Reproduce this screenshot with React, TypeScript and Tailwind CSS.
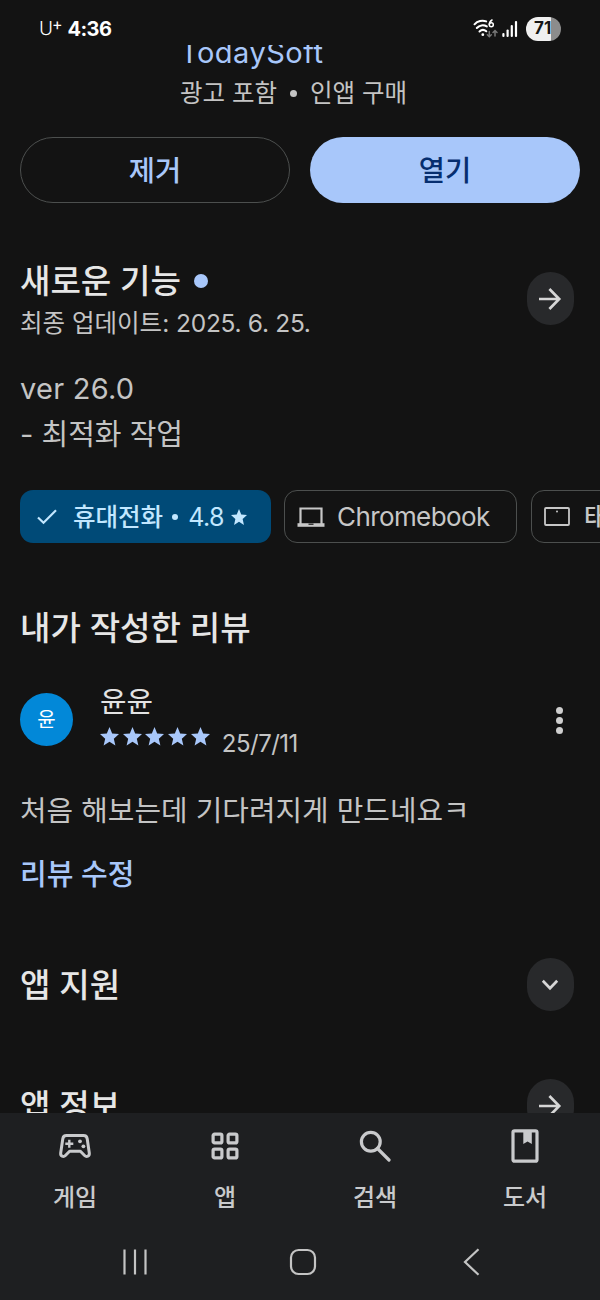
import type { ReactNode } from "react";

const NAV_TABS = [
  { label: "게임", icon: <GameIcon /> },
  { label: "앱", icon: <AppsIcon /> },
  { label: "검색", icon: <SearchIcon /> },
  { label: "도서", icon: <BookIcon /> },
];

function Star({ className }: { className: string }) {
  return (
    <svg viewBox="2 2 20 19" preserveAspectRatio="none" className={className} fill="currentColor">
      <path d="M12 17.270L18.180 21l-1.640-7.030L22 9.240l-7.190-.610L12 2 9.190 8.630 2 9.240l5.460 4.730L5.820 21z" />
    </svg>
  );
}

function GameIcon() {
  return (
    <svg width="34" height="26" viewBox="0 0 34 26" fill="none" stroke="currentColor">
      <path
        d="M8.500 2.500h17c2 0 3.400 1.300 3.700 3.200l2.100 14.300c.5 3.300-2.800 4.400-4.700 2.500L22.400 18.200H11.600L7.400 22.500c-1.900 1.900-5.200.8-4.700-2.500L4.800 5.700C5.100 3.800 6.500 2.500 8.500 2.500z"
        strokeWidth="3"
        strokeLinejoin="round"
      />
      <path d="M11.300 6.800v8M7.300 10.800h8" strokeWidth="2.400" />
      <circle cx="22" cy="8.300" r="1.900" fill="currentColor" stroke="none" />
      <circle cx="25.400" cy="13.300" r="1.900" fill="currentColor" stroke="none" />
    </svg>
  );
}

function AppsIcon() {
  return (
    <svg width="28" height="28" viewBox="0 0 28 28" fill="none" stroke="currentColor" strokeWidth="3.200">
      <rect x="2.100" y="2.100" width="8.800" height="8.800" rx="1.500" />
      <rect x="17.100" y="2.100" width="8.800" height="8.800" rx="1.500" />
      <rect x="2.100" y="17.100" width="8.800" height="8.800" rx="1.500" />
      <rect x="17.100" y="17.100" width="8.800" height="8.800" rx="1.500" />
    </svg>
  );
}

function SearchIcon() {
  return (
    <svg width="32" height="32" viewBox="0 0 32 32" fill="none" stroke="currentColor" strokeWidth="3.200">
      <circle cx="11.800" cy="11.800" r="9.400" />
      <path d="M18.500 18.500L30 30" strokeLinecap="round" />
    </svg>
  );
}

function BookIcon() {
  return (
    <svg width="28" height="34" viewBox="0 0 28 34" fill="none" stroke="currentColor" strokeWidth="3.200">
      <rect x="2" y="1.800" width="24" height="30.400" rx="1.500" />
      <path d="M12.300 2h8.500v13l-4.250-2.400-4.250 2.400z" fill="currentColor" stroke="none" />
    </svg>
  );
}

function ArrowIcon() {
  return (
    <svg width="24" height="24" viewBox="0 0 24 24" fill="none" stroke="currentColor" strokeWidth="2.700">
      <path d="M1 12h20.500M11.400 2l9.800 10-9.800 10" />
    </svg>
  );
}

function ChevronIcon() {
  return (
    <svg width="18" height="12" viewBox="0 0 18 12" fill="none" stroke="currentColor" strokeWidth="2.700">
      <path d="M1.800 1.800L9 9.300l7.200-7.500" />
    </svg>
  );
}

function RoundButton({ children }: { children: ReactNode }) {
  return (
    <button
      type="button"
      className="flex h-[53px] w-[47px] shrink-0 items-center justify-center rounded-full bg-[#28292b] pr-[1px] text-[#d6d6d6]"
    >
      {children}
    </button>
  );
}

function StatusBar() {
  return (
    <header className="flex h-[45px] shrink-0 items-center justify-between px-[39px] pt-[12px] text-white">
      <div className="flex h-[33px] items-center">
        <span className="text-[19px] leading-none font-light">U</span>
        <span className="mb-[10px] -ml-px text-[16px] leading-none">+</span>
        <span className="ml-[5px] text-[20px] leading-none font-bold tracking-[-0.600px]">4:36</span>
      </div>
      <div className="flex h-[33px] items-center">
        <svg width="26" height="20" viewBox="0 0 26 20" fill="none" stroke="currentColor" strokeWidth="2" strokeLinecap="round">
          <path d="M1.500 5.300C4.500 1.800 9.500 .8 13.200 2.400M3.800 9c2.600-2.900 6.800-3.400 10-1.600M6.500 12.500c2-1.900 4.800-1.900 6.800-.2" />
          <circle cx="9.800" cy="15.700" r="1.400" fill="currentColor" stroke="none" />
          <path d="M19 1c-2 1.200-2.700 2.800-2.700 4.600" strokeWidth="1.500" />
          <circle cx="18.300" cy="5.800" r="2" strokeWidth="1.500" />
          <path d="M16.300 12.500v5M14.300 15.800l2 2 2-2M22 17v-5M20 13.500l2-2 2 2" stroke="#777" strokeWidth="1.500" />
        </svg>
        <svg width="16" height="18" viewBox="0 0 16 18" className="ml-[3px]" fill="currentColor">
          <rect x="0.300" y="13" width="2.200" height="4" rx="1" />
          <rect x="4.500" y="9.500" width="2.200" height="7.500" rx="1" />
          <rect x="8.700" y="5" width="2.200" height="12" rx="1" />
          <rect x="12.900" y="1" width="2.200" height="16" rx="1" />
        </svg>
        <div className="ml-[8px] flex h-[24px] w-[35px] items-center overflow-hidden rounded-full bg-[linear-gradient(90deg,#f0f0f0_71%,#8c8c8c_71%)] pl-[8px] text-[17px] leading-none font-bold text-[#161616]">
          71
        </div>
      </div>
    </header>
  );
}

function DeviceChips() {
  return (
    <div className="mt-8 -mr-5 flex h-[53px] gap-[14px] overflow-hidden text-[25px] leading-[36px]">
      <div className="flex w-[251px] shrink-0 items-center rounded-[13px] bg-[#004a77] text-[#c2e7ff]">
        <svg width="20" height="16" viewBox="0 0 20 16" className="ml-[17px]" fill="none" stroke="currentColor" strokeWidth="2.200">
          <path d="M1 8.500l5.500 5.300L19 1.200" />
        </svg>
        <span className="mt-px ml-[16px] text-[24.500px] font-medium">휴대전화</span>
        <span className="ml-[9px] h-[6px] w-[6px] rounded-full bg-current" />
        <span className="ml-[10px] tracking-[-0.600px]">4.8</span>
        <Star className="ml-[7px] h-4 w-4" />
      </div>
      <div className="-ml-px flex w-[233px] shrink-0 items-center rounded-[13px] border-[1.500px] border-[#4c4f4e] text-[#c7c7c7]">
        <svg width="28" height="20" viewBox="0 0 28 20" className="ml-[12px]" fill="none" stroke="currentColor" strokeWidth="2.200">
          <path d="M3.500 17V1.500h21V17" />
          <path d="M0.500 18h27" strokeWidth="3.600" />
          <path d="M11.500 17.200h5" stroke="#131313" strokeWidth="1.200" />
        </svg>
        <span className="ml-[12px] text-[26px] tracking-[-0.600px]">Chromebook</span>
      </div>
      <div className="flex w-[190px] shrink-0 items-center rounded-[13px] border-[1.500px] border-[#4c4f4e] text-[#c7c7c7]">
        <svg width="26" height="19" viewBox="0 0 26 19" className="ml-[12px]" fill="none" stroke="currentColor" strokeWidth="1.800">
          <rect x="1" y="1" width="24" height="17" rx="1" />
          <circle cx="13" cy="4.500" r="1" fill="currentColor" stroke="none" />
        </svg>
        <span className="ml-[14px] font-medium">태블릿</span>
      </div>
    </div>
  );
}

function MyReview() {
  return (
    <section>
      <h2 className="mt-[63px] text-[33.100px] leading-[44px] font-medium text-[#e6e6e6]">내가 작성한 리뷰</h2>
      <div className="mt-[34px] flex h-[76px] items-start">
        <div className="mt-[9px] flex h-[53px] w-[53px] items-center justify-center rounded-full bg-[#0288d8] pt-px text-[20px] leading-none text-white">
          윤
        </div>
        <div className="ml-[27px] flex-1">
          <div className="text-[28.800px] leading-[36px] text-[#e3e3e3]">윤윤</div>
          <div className="flex items-start">
            <div className="mt-[7px] flex gap-[3.700px] text-[#a8c7fa]">
              {[1, 2, 3, 4, 5].map((n) => (
                <Star key={n} className="h-[18.500px] w-[19px]" />
              ))}
            </div>
            <span className="mt-[8px] ml-[12px] text-[24px] leading-[32px] tracking-[-0.500px] text-[#c4c4c4]">25/7/11</span>
          </div>
        </div>
        <button type="button" className="mt-[23px] mr-[17px] flex flex-col gap-[3px]">
          <span className="h-[7px] w-[7px] rounded-full bg-[#cfcfcf]" />
          <span className="h-[7px] w-[7px] rounded-full bg-[#cfcfcf]" />
          <span className="h-[7px] w-[7px] rounded-full bg-[#cfcfcf]" />
        </button>
      </div>
      <p className="mt-[31px] text-[28.900px] leading-[40px] text-[#c4c4c4]">처음 해보는데 기다려지게 만드네요ㅋ</p>
      <a className="mt-6 block text-[29px] leading-[40px] font-medium text-[#a8c7fa]">리뷰 수정</a>
    </section>
  );
}

export default function App() {
  return (
    <div className="flex h-[1300px] w-[600px] flex-col overflow-hidden bg-[#131313] font-['Inter','Noto_Sans_CJK_KR',sans-serif]">
      <StatusBar />

      <main className="h-[1068px] shrink-0 overflow-hidden px-5">
        <div className="-mt-[10px] pl-[160px]">
          <div className="text-[29px] leading-[36px] tracking-[0.500px] text-[#a8c7fa]">TodaySoft</div>
          <div className="mt-1 flex items-center text-[24.500px] leading-[36px] text-[#c4c4c4]">
            광고 포함
            <span className="mx-[13px] h-[7px] w-[7px] rounded-full bg-current" />
            인앱 구매
          </div>
        </div>

        <div className="mt-[26px] flex gap-5 text-[28.500px] leading-[40px] font-medium">
          <button type="button" className="h-[66px] w-[270px] rounded-full border-[1.500px] border-[#4c4f4e] pt-[2px] text-[#a8c7fa]">
            제거
          </button>
          <button type="button" className="h-[66px] w-[270px] rounded-full bg-[#a8c7fa] pt-[2px] text-[#062e6f]">
            열기
          </button>
        </div>

        <section>
          <div className="mt-14 flex h-[82px] items-start justify-between pr-[6px]">
            <div>
              <h2 className="flex items-center text-[33.100px] leading-[44px] font-medium text-[#e6e6e6]">
                새로운 기능
                <span className="ml-[13px] h-[14px] w-[14px] rounded-full bg-[#a8c7fa]" />
              </h2>
              <p className="mt-[2px] text-[24.500px] leading-[36px] text-[#c4c4c4]">
                최종 업데이트: <span className="tracking-[-0.300px]">2025. 6. 25.</span>
              </p>
            </div>
            <div className="mt-[13px]">
              <RoundButton>
                <ArrowIcon />
              </RoundButton>
            </div>
          </div>
          <p className="mt-[25px] text-[29px] leading-[46px] text-[#c4c4c4]">
            <span className="tracking-[0.250px]">ver 26.0</span>
            <br />- 최적화 작업
          </p>
        </section>

        <DeviceChips />
        <MyReview />

        <div className="mt-[63px] flex h-[53px] items-center justify-between pr-[6px]">
          <h2 className="text-[33.100px] leading-[44px] font-medium text-[#e6e6e6]">앱 지원</h2>
          <RoundButton>
            <ChevronIcon />
          </RoundButton>
        </div>
        <div className="mt-[68px] flex h-[53px] items-center justify-between pr-[6px]">
          <h2 className="text-[33.100px] leading-[44px] font-medium text-[#e6e6e6]">앱 정보</h2>
          <RoundButton>
            <ArrowIcon />
          </RoundButton>
        </div>
      </main>

      <footer className="flex-1 bg-[#1e1f21] text-[#c9cacc]">
        <nav className="grid grid-cols-4 pt-[15px]">
          {NAV_TABS.map((tab) => (
            <button key={tab.label} type="button" className="flex flex-col items-center">
              <span className="flex h-9 items-center justify-center">{tab.icon}</span>
              <span className="mt-[16px] text-[24px] leading-[36px] font-medium">{tab.label}</span>
            </button>
          ))}
        </nav>
        <div className="mt-[31px] flex h-[30px] items-center pl-[122px] text-[#c4c4c4]">
          <svg width="26" height="26" viewBox="0 0 26 26" stroke="currentColor" strokeWidth="2.200">
            <path d="M2.500 0.500v25M13 0.500v25M23.500 0.500v25" />
          </svg>
          <svg width="28" height="28" viewBox="0 0 28 28" className="ml-[141px]" fill="none" stroke="currentColor" strokeWidth="2.200">
            <rect x="2" y="2" width="24" height="24" rx="7.500" />
          </svg>
          <svg width="17" height="28" viewBox="0 0 17 28" className="ml-[146px]" fill="none" stroke="currentColor" strokeWidth="2.200">
            <path d="M15.500 1.200L2 14l13.500 12.800" />
          </svg>
        </div>
      </footer>
    </div>
  );
}
